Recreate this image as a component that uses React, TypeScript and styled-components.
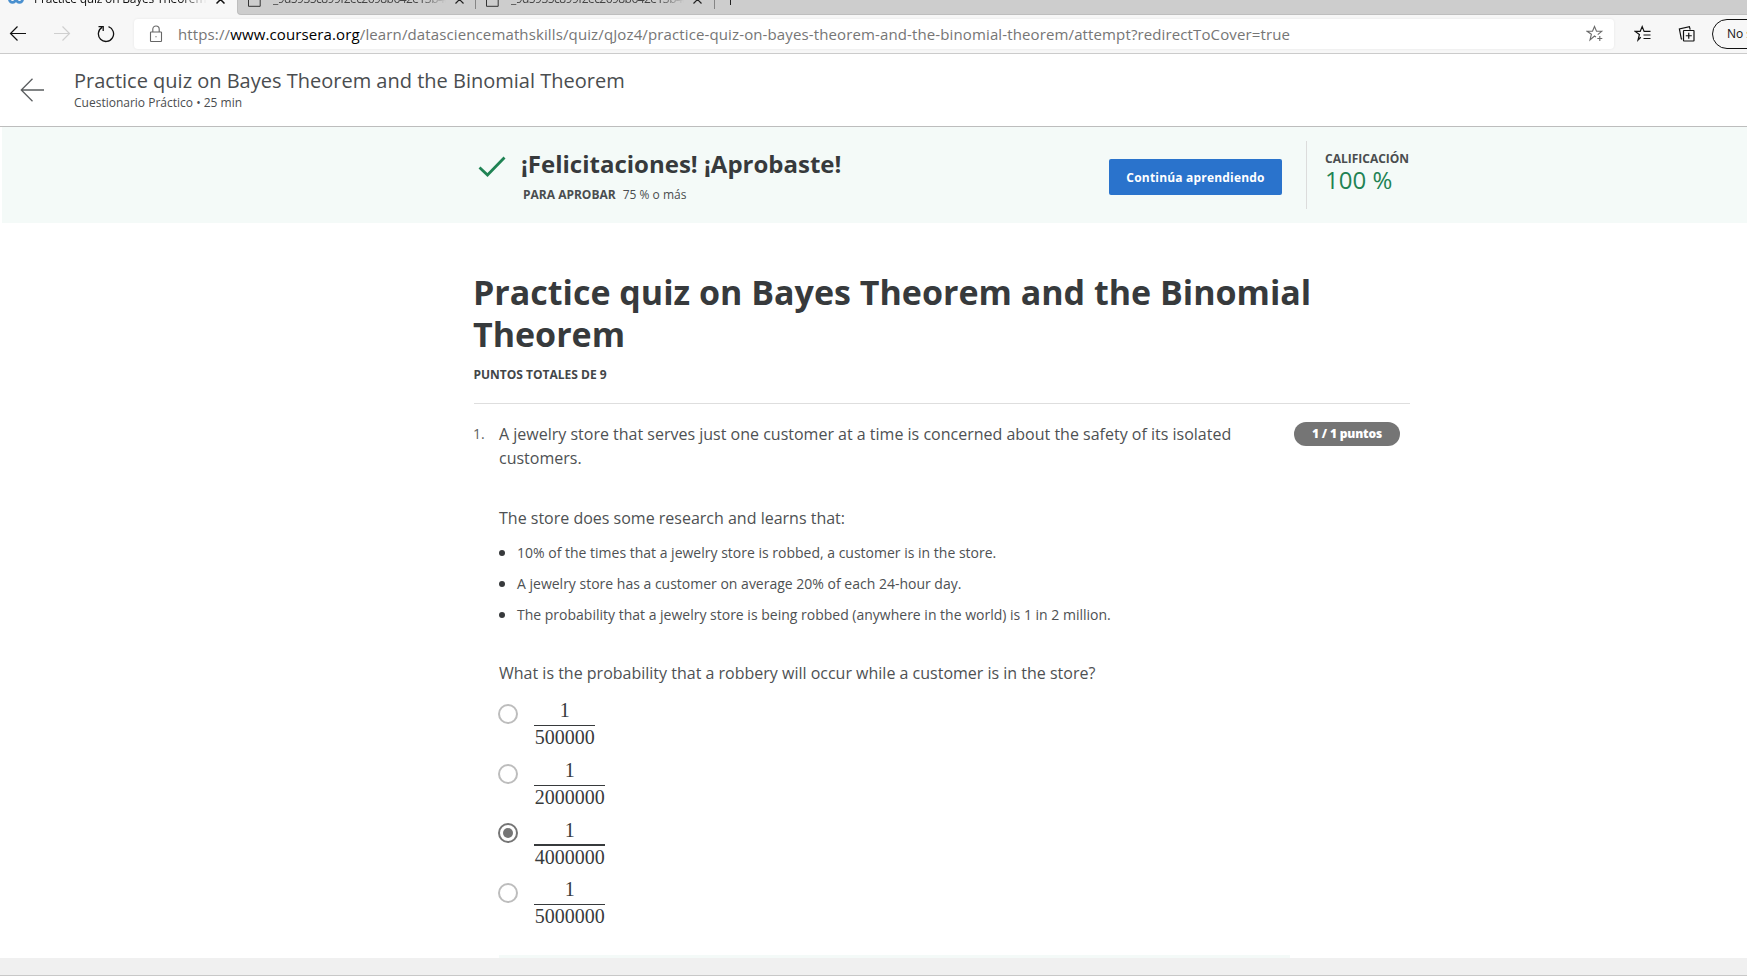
import React from 'react';
import styled, { createGlobalStyle } from 'styled-components';

const Global = createGlobalStyle`
  * { box-sizing: border-box; }
  body { margin: 0; background: #fff; font-family: "Open Sans", "Noto Sans", sans-serif; color: #373a3c; }
  h1, h2, p, ul, ol { margin: 0; padding: 0; }
  svg { display: block; flex: none; }
`;

const Window = styled.div`
  width: 1747px;
  height: 976px;
  overflow: hidden;
  display: flex;
  flex-direction: column;
  border-bottom: 1px solid #c8c8c8;
`;

/* Browser chrome */
const TabStrip = styled.div`
  height: 15px;
  flex: none;
  display: flex;
  background: #f7f7f7;
  overflow: hidden;
`;
const ActiveTab = styled.div`
  width: 237px;
  display: flex;
  align-items: flex-start;
  padding-left: 8px;
  background: #f7f7f7;
`;
const InactiveTabs = styled.div`
  flex: 1;
  display: flex;
  align-items: flex-start;
  background: #cdcdcd;
  border-bottom: 1px solid #bebebe;
  border-left: 1px solid #bebebe;
  border-bottom-left-radius: 4px;
`;
const Tab = styled.div`
  width: 239px;
  height: 9px;
  display: flex;
  align-items: flex-start;
  padding-left: 10px;
  border-right: 1px solid #858585;
  &:first-child {
    width: 238px;
  }
`;
const TabTitle = styled.span<{ $tight?: boolean }>`
  width: 175px;
  height: 17px;
  flex: none;
  margin: -10px 0 0 ${(p) => (p.$tight ? 12 : 10)}px;
  overflow: hidden;
  white-space: nowrap;
  font-size: 12px;
  line-height: 17px;
  letter-spacing: ${(p) => (p.$tight ? -0.55 : -0.2)}px;
  color: ${(p) => (p.$tight ? '#444' : '#111')};
  mask-image: linear-gradient(to right, #000 148px, transparent 173px);
`;
const TabClose = styled.svg`
  margin: -5px 0 0 7px;
`;
const NewTab = styled.svg`
  margin: -7px 0 0 9px;
`;
const Toolbar = styled.div`
  height: 39px;
  flex: none;
  display: flex;
  align-items: flex-start;
  background: #f7f7f7;
  border-bottom: 1px solid #cbcbcb;
  overflow: hidden;
`;
const NavIcons = styled.div`
  width: 134px;
  height: 38px;
  flex: none;
  display: flex;
  padding: 9px 0 0 9px;
  gap: 26px;
`;
const AddressBar = styled.div`
  width: 1480px;
  height: 30px;
  flex: none;
  margin-top: 4px;
  padding: 0 10px 0 15px;
  display: flex;
  align-items: center;
  background: #fff;
  border-radius: 4px;
  box-shadow: 0 0 3px rgba(0, 0, 0, 0.07);
`;
const Url = styled.span`
  flex: 1;
  margin-left: 15px;
  font-size: 15px;
  letter-spacing: 0.124px;
  line-height: 28px;
  white-space: nowrap;
  color: #767676;
`;
const Domain = styled.span`
  color: #000;
`;
const BrowserActions = styled.div`
  flex: none;
  display: flex;
  gap: 26px;
  padding: 10px 0 0 20px;
`;
const ProfilePill = styled.div`
  width: 90px;
  height: 30px;
  flex: none;
  margin: 4px 0 0 16px;
  padding-left: 14px;
  border: 1px solid #111;
  border-radius: 15px;
  font-size: 12px;
  line-height: 28px;
  white-space: nowrap;
  color: #111;
`;

/* Course header */
const Header = styled.header`
  height: 73px;
  flex: none;
  display: flex;
  border-bottom: 1px solid #bdbdbd;
  padding: 14px 0 0 20px;
`;
const HeaderText = styled.div`
  margin-left: 29px;
`;
const HeaderTitle = styled.p`
  font-size: 20px;
  line-height: 26px;
  color: #4a4d4f;
`;
const HeaderMeta = styled.p`
  font-size: 12px;
  line-height: 18px;
  color: #4a4d4f;
`;

/* Result banner */
const Banner = styled.section`
  height: 96px;
  flex: none;
  margin-left: 2px;
  padding-left: 476px;
  display: flex;
  background: #f4faf8;
`;
const ResultText = styled.div`
  width: 588px;
  margin-left: 15px;
  padding-top: 19px;
`;
const ResultTitle = styled.h2`
  font-size: 24px;
  line-height: 36px;
  font-weight: 700;
`;
const ResultMeta = styled.p`
  padding-left: 2px;
  margin-top: 4px;
  font-size: 12px;
  line-height: 18px;
  color: #4a4d4f;
`;
const PassLabel = styled.b`
  margin-right: 7px;
`;
const ContinueButton = styled.button`
  width: 173px;
  height: 36px;
  margin-top: 32px;
  padding: 1px 0 0;
  border: 0;
  border-radius: 2px;
  background: #2a73cc;
  color: #fff;
  font: 700 12px/36px "Open Sans", sans-serif;
  letter-spacing: 0.19px;
`;
const Grade = styled.div`
  height: 68px;
  margin: 14px 0 0 24px;
  padding: 8px 0 0 18px;
  border-left: 1px solid #dcdcdc;
`;
const GradeLabel = styled.p`
  font-size: 12px;
  line-height: 20px;
  font-weight: 700;
  color: #4a4d4f;
`;
const GradeValue = styled.p`
  font-size: 24px;
  line-height: 24px;
  margin-top: -1px;
  color: #1f8354;
`;

/* Quiz */
const Quiz = styled.main`
  width: 936px;
  height: 735px;
  flex: none;
  margin-left: 474px;
  padding-top: 48px;
  display: flex;
  flex-direction: column;
`;
const QuizTitle = styled.h1`
  margin-left: -1px;
  font-size: 34px;
  line-height: 42px;
  font-weight: 700;
`;
const TotalPoints = styled.p`
  margin-top: 10px;
  height: 39px;
  flex: none;
  font-size: 12px;
  line-height: 20px;
  font-weight: 700;
  text-indent: -0.5px;
  color: #434648;
  border-bottom: 1px solid #dedede;
`;
const Question = styled.div`
  flex: 1;
  display: flex;
  align-items: flex-start;
  padding-top: 18px;
`;
const QuestionNumber = styled.span`
  width: 25px;
  flex: none;
  font-size: 14px;
  line-height: 23px;
  text-indent: -1px;
  color: #5c5f61;
`;
const QuestionBody = styled.div`
  width: 791px;
  height: 536px;
  flex: none;
  display: flex;
  flex-direction: column;
`;
const Prompt = styled.p<{ $top?: number }>`
  width: 745px;
  margin-top: ${(p) => p.$top ?? 0}px;
  font-size: 16px;
  line-height: 24px;
  color: #4e5153;
`;
const Facts = styled.ul`
  list-style: none;
  margin-top: 7px;
`;
const Fact = styled.li`
  display: flex;
  align-items: center;
  gap: 12px;
  height: 31px;
  font-size: 14px;
  line-height: 31px;
  color: #4e5153;
  &::before {
    content: "";
    width: 6px;
    height: 6px;
    border-radius: 50%;
    background: #373a3c;
  }
`;
const Options = styled.div`
  display: flex;
  flex-direction: column;
  margin-top: 14px;
`;
const Option = styled.label<{ $height: number }>`
  display: flex;
  align-items: flex-start;
  height: ${(p) => p.$height}px;
`;
const Radio = styled.span<{ $checked?: boolean }>`
  width: 20px;
  height: 20px;
  margin: ${(p) => (p.$checked ? 4 : 5)}px 16px 0 -1px;
  display: grid;
  place-items: center;
  border: 2px solid ${(p) => (p.$checked ? '#757575' : '#bdbdbd')};
  border-radius: 50%;
  &::after {
    content: "";
    width: 10px;
    height: 10px;
    border-radius: 50%;
    background: ${(p) => (p.$checked ? '#757575' : 'transparent')};
  }
`;
const Fraction = styled.span`
  display: flex;
  flex-direction: column;
  font-family: "Liberation Serif", serif;
  font-size: 20px;
  line-height: 20px;
  text-align: center;
  color: #373a3c;
`;
const Numerator = styled.span<{ $thick?: boolean }>`
  height: 27px;
  padding-top: 1px;
  border-bottom: ${(p) => (p.$thick ? 2 : 1)}px solid #373a3c;
`;
const Denominator = styled.span`
  margin-top: 1px;
  padding: 0 0.7px;
`;
const FeedbackEdge = styled.div`
  height: 3px;
  margin-top: auto;
  background: #f4faf8;
`;
const PointsBadge = styled.span`
  width: 106px;
  height: 24px;
  margin-left: 4px;
  border-radius: 12px;
  background: #757575;
  color: #fff;
  text-align: center;
  font-size: 12px;
  line-height: 23px;
  font-weight: 800;
  letter-spacing: -0.15px;
`;
const StatusBar = styled.footer`
  flex: 1;
  background: #f0f0f0;
`;

const PageIcon = () => (
  <svg width="13" height="7" viewBox="0 0 13 7" fill="none" stroke="#333">
    <path d="M.5 -1V6.3H12.2V-1" />
  </svg>
);

const FileTab = () => (
  <Tab>
    <PageIcon />
    <TabTitle $tight>_9d5935c899f2ec2698b642e13b4a</TabTitle>
    <TabClose width="9" height="9" viewBox="0 0 9 9" stroke="#222" strokeWidth="1.2">
      <path d="M.5.5l8 8M8.5.5l-8 8" />
    </TabClose>
  </Tab>
);

const facts = [
  '10% of the times that a jewelry store is robbed, a customer is in the store.',
  'A jewelry store has a customer on average 20% of each 24-hour day.',
  'The probability that a jewelry store is being robbed (anywhere in the world) is 1 in 2 million.',
];

const options = [
  { value: '500000', height: 60 },
  { value: '2000000', height: 60 },
  { value: '4000000', height: 59, checked: true },
  { value: '5000000', height: 50 },
];

export default function App() {
  return (
    <Window>
      <Global />
      <TabStrip>
        <ActiveTab>
          <svg width="16" height="5" viewBox="0 0 16 5" fill="none" stroke="#4a90cf" strokeWidth="2.8">
            <circle cx="4.5" cy="-.8" r="3.1" />
            <circle cx="11.5" cy="-.8" r="3.1" />
          </svg>
          <TabTitle>Practice quiz on Bayes Theorem and</TabTitle>
          <TabClose width="9" height="9" viewBox="0 0 9 9" stroke="#111" strokeWidth="1.5">
            <path d="M.5.5l8 8M8.5.5l-8 8" />
          </TabClose>
        </ActiveTab>
        <InactiveTabs>
          <FileTab />
          <FileTab />
          <NewTab width="13" height="13" viewBox="0 0 13 13" stroke="#222">
            <path d="M6.5 0v12M0 6.5h13" />
          </NewTab>
        </InactiveTabs>
      </TabStrip>

      <Toolbar>
        <NavIcons>
          <svg width="18" height="20" viewBox="0 0 18 20" fill="none" stroke="#111" strokeWidth="1.2">
            <path d="M17 9.5H1.5M8.5 2.5l-7 7 7 7" />
          </svg>
          <svg width="18" height="20" viewBox="0 0 18 20" fill="none" stroke="#cfcfcf" strokeWidth="1.2">
            <path d="M1 9.5h15.5M9.5 2.5l7 7-7 7" />
          </svg>
          <svg width="18" height="20" viewBox="0 0 18 20" fill="none" stroke="#111" strokeWidth="1.3">
            <path d="M11.5 2.7A7.6 7.6 0 1 1 5 3.4M1.5 2.7H6.2V7" />
          </svg>
        </NavIcons>
        <AddressBar>
          <svg width="14" height="18" viewBox="0 0 14 18" fill="none" stroke="#666" strokeWidth="1.1">
            <rect x="1.5" y="7" width="11" height="9.5" rx=".6" />
            <path d="M3.8 7V4.2a3.2 3.2 0 0 1 6.4 0V7" />
            <path d="M6.4 11.8h1.2" />
          </svg>
          <Url>
            https://<Domain>www.coursera.org</Domain>
            /learn/datasciencemathskills/quiz/qJoz4/practice-quiz-on-bayes-theorem-and-the-binomial-theorem/attempt?redirectToCover=true
          </Url>
          <svg width="18" height="18" viewBox="0 0 18 18" fill="none" stroke="#6b6b6b" strokeWidth="1.1">
            <path d="M10 12L8.5 11 4 15l1.4-5.8L1.2 6.3h5.3L8.5 1.5l2 4.8h5.2l-4 3.3M13.8 11v5M11.3 13.5h5" />
          </svg>
        </AddressBar>
        <BrowserActions>
          <svg width="18" height="18" viewBox="0 0 18 18" fill="none" stroke="#111" strokeWidth="1.2">
            <path d="M6.8 12.3L4 15l1.4-5.6L1.2 6.4h5L8.2 1.6l1.9 4.8h6.4M9.5 10h7M9.5 13.5h7" />
          </svg>
          <svg width="18" height="18" viewBox="0 0 18 18" fill="none" stroke="#111" strokeWidth="1.2">
            <path d="M4.2 14.1L3.3 13.8 1.4 4 11.4 1.7l.8 3" />
            <rect x="5.5" y="5.5" width="10.5" height="10.5" rx=".5" />
            <path d="M10.75 7.8v6M7.8 10.75h6" />
          </svg>
        </BrowserActions>
        <ProfilePill>No sincronizado</ProfilePill>
      </Toolbar>

      <Header>
        <svg width="25" height="46" viewBox="0 0 25 46" fill="none" stroke="#5a5d5f" strokeWidth="1.3">
          <path d="M24 22H1.5M12.5 10.8L1.3 22l11.2 11.2" />
        </svg>
        <HeaderText>
          <HeaderTitle>Practice quiz on Bayes Theorem and the Binomial Theorem</HeaderTitle>
          <HeaderMeta>Cuestionario Práctico • 25 min</HeaderMeta>
        </HeaderText>
      </Header>

      <Banner>
        <svg width="28" height="60" viewBox="0 0 28 60" fill="none" stroke="#1f8354" strokeWidth="2.8">
          <path d="M1.5 40.5l8 7.5L26.5 30.5" />
        </svg>
        <ResultText>
          <ResultTitle>¡Felicitaciones! ¡Aprobaste!</ResultTitle>
          <ResultMeta>
            <PassLabel>PARA APROBAR</PassLabel>75 % o más
          </ResultMeta>
        </ResultText>
        <ContinueButton>Continúa aprendiendo</ContinueButton>
        <Grade>
          <GradeLabel>CALIFICACIÓN</GradeLabel>
          <GradeValue>100 %</GradeValue>
        </Grade>
      </Banner>

      <Quiz>
        <QuizTitle>Practice quiz on Bayes Theorem and the Binomial Theorem</QuizTitle>
        <TotalPoints>PUNTOS TOTALES DE 9</TotalPoints>
        <Question>
          <QuestionNumber>1.</QuestionNumber>
          <QuestionBody>
            <Prompt>
              A jewelry store that serves just one customer at a time is concerned about the safety of its isolated
              customers.
            </Prompt>
            <Prompt $top={36}>The store does some research and learns that:</Prompt>
            <Facts>
              {facts.map((f) => (
                <Fact key={f}>{f}</Fact>
              ))}
            </Facts>
            <Prompt $top={31}>What is the probability that a robbery will occur while a customer is in the store?</Prompt>
            <Options>
              {options.map((o) => (
                <Option key={o.value} $height={o.height}>
                  <Radio $checked={o.checked} />
                  <Fraction>
                    <Numerator $thick={o.checked}>1</Numerator>
                    <Denominator>{o.value}</Denominator>
                  </Fraction>
                </Option>
              ))}
            </Options>
            <FeedbackEdge />
          </QuestionBody>
          <PointsBadge>1 / 1 puntos</PointsBadge>
        </Question>
      </Quiz>
      <StatusBar />
    </Window>
  );
}
